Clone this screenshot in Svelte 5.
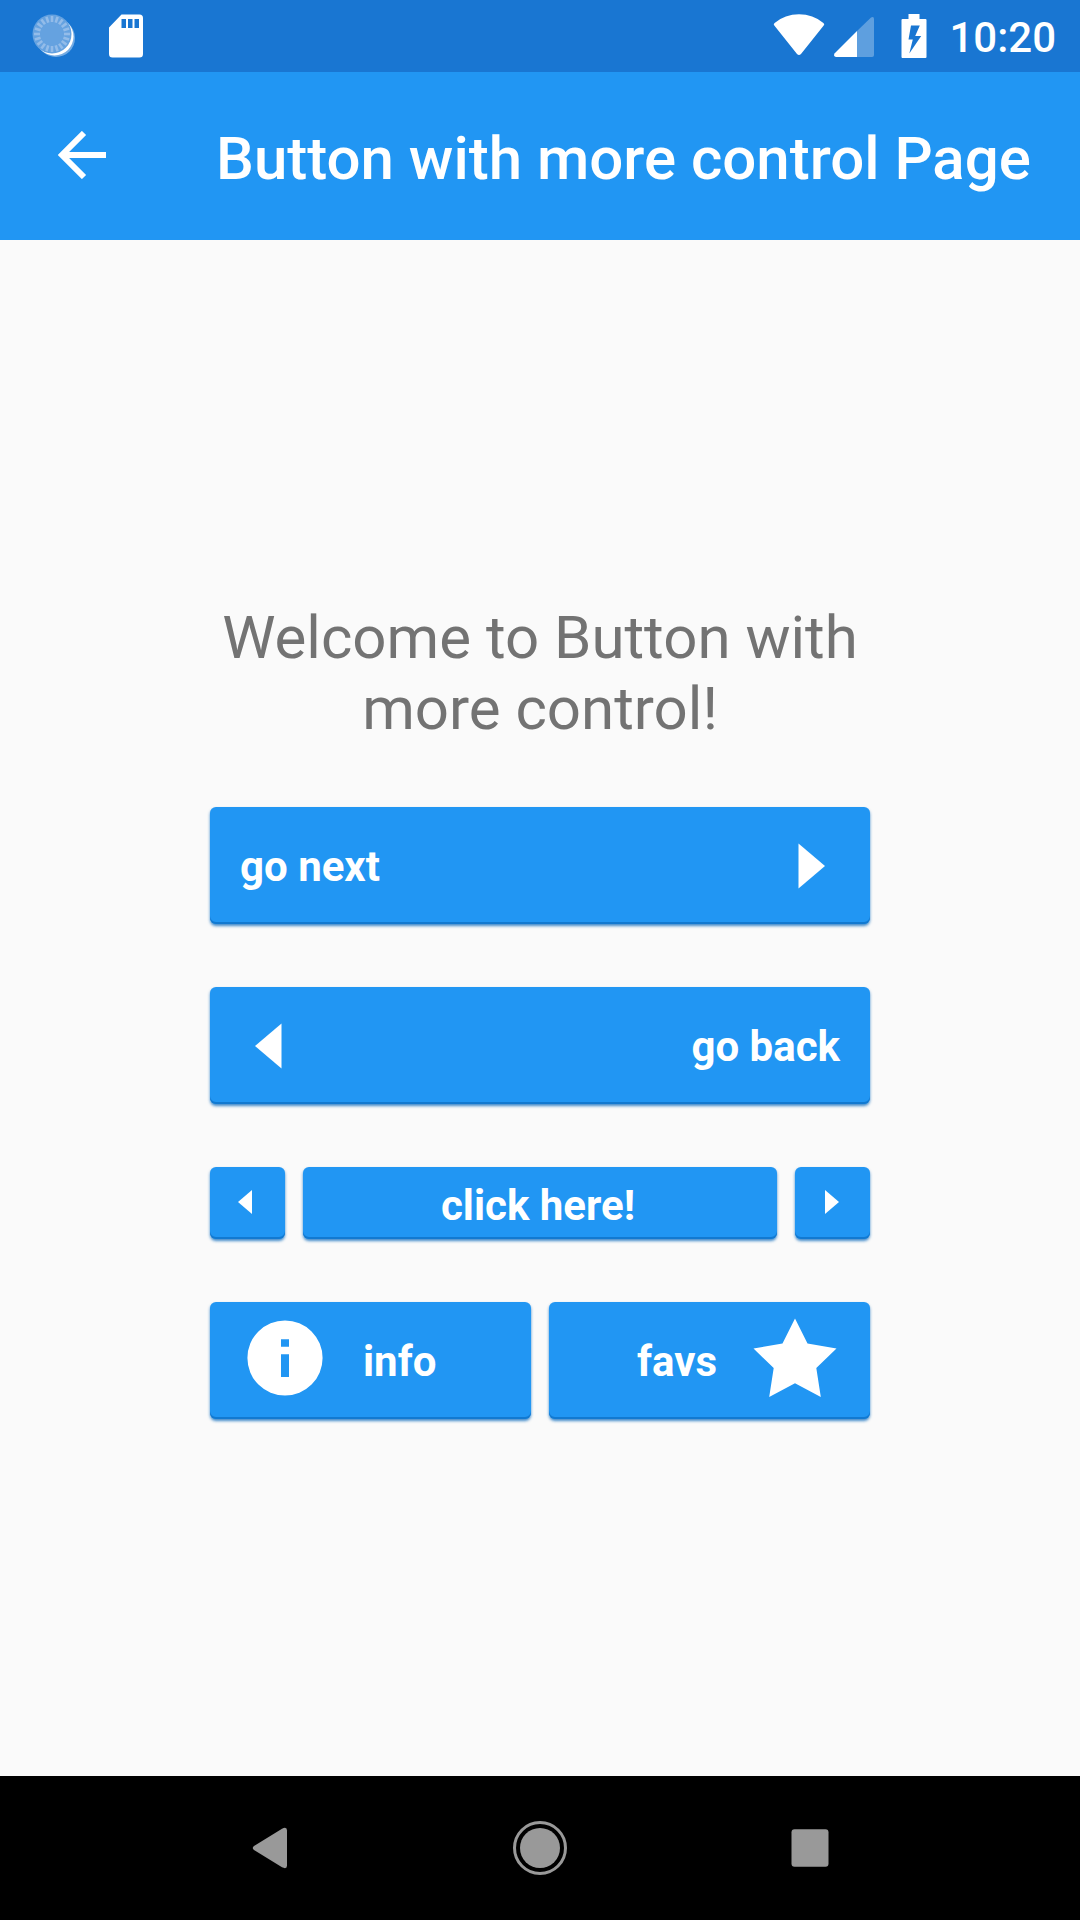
<script>
  const ticks = Array.from({ length: 20 }, (_, i) => i * 18);
</script>

<div class="screen">
  <header class="status">
    <div class="group notices">
      <svg width="44" height="44" viewBox="0 0 44 44" aria-hidden="true">
        <circle cx="24" cy="24" r="19" fill="#fff" opacity=".4" />
        <circle cx="22.500" cy="22.500" r="19" fill="#fff" />
        <circle cx="20" cy="20" r="19.500" fill="#65a2e0" />
        <g stroke="#93bce9" stroke-width="2.600">
          {#each ticks as angle}
            <path d="M20 2v6" transform="rotate({angle} 20 20)" />
          {/each}
        </g>
      </svg>
      <svg width="36" height="44" viewBox="0 0 36 44" aria-hidden="true">
        <path fill="#fff" fill-rule="evenodd" d="M13.500 0.500H31.500Q35 .5 35 4V40Q35 43.500 31.500 43.500H4.500Q1 43.500 1 40V13.500ZM13.500 5v9h4.500V5ZM20 5v9h4.500V5ZM26.500 5v9H31V5Z" />
      </svg>
    </div>
    <div class="group system">
      <svg width="52" height="44" viewBox="0 0 52 44" aria-hidden="true">
        <path fill="#fff" d="M1.300 11.500Q0 10.300 1.600 9Q12 .3 26 .3T50.400 9Q52 10.300 50.700 11.500L28 40Q26 42 24 40Z" />
      </svg>
      <svg width="42" height="44" viewBox="0 0 42 44" aria-hidden="true">
        <path fill="#fff" opacity=".3" d="M24 17L38 3.500Q41 2 41 5V41Q41 43 39 43H24Z" />
        <path fill="#fff" d="M24 17V43H3Q0 42 1.500 39.500Z" />
      </svg>
      <svg class="battery" width="26" height="44" viewBox="0 0 26 44" aria-hidden="true">
        <path fill="#fff" d="M7.500 0h11v5H24.500Q25.500 5 25.500 6V43Q25.500 44 24.500 44H1.500Q.5 44 .5 43V6Q.5 5 1.500 5H7.500Z" />
        <path fill="#1976d2" d="M10 11.500h8.800l-4.600 10.500h6L8.300 39.500l3.500-14H7.500z" />
      </svg>
      <time>10:20</time>
    </div>
  </header>

  <div class="appbar">
    <button class="back" aria-label="Navigate up">
      <svg width="48" height="48" viewBox="0 0 48 48" aria-hidden="true">
        <path fill="none" stroke="#fff" stroke-width="6" d="M26 2L4 24l22 22M4 24h44" />
      </svg>
    </button>
    <h1>Button with more control Page</h1>
  </div>

  <main>
    <div class="stack">
      <p>Welcome to Button with more control!</p>
      <button class="btn tall spread">
        <span>go next</span>
        <svg class="arrow" width="28" height="46" viewBox="0 0 28 46" aria-hidden="true"><path fill="#fff" d="M.5 .5L27 23L.5 45.500Z" /></svg>
      </button>
      <button class="btn tall spread">
        <svg class="arrow" width="28" height="46" viewBox="0 0 28 46" aria-hidden="true"><path fill="#fff" d="M27.500 .5L1 23L27.500 45.500Z" /></svg>
        <span>go back</span>
      </button>
      <div class="row small">
        <button class="btn" aria-label="Previous">
          <svg width="20" height="26" viewBox="0 0 20 26" aria-hidden="true"><path fill="#fff" d="M14 0L0 12L14 24Z" /></svg>
        </button>
        <button class="btn"><span>click here!</span></button>
        <button class="btn" aria-label="Next">
          <svg width="16" height="26" viewBox="0 0 16 26" aria-hidden="true"><path fill="#fff" d="M0 0L14 12L0 24Z" /></svg>
        </button>
      </div>
      <div class="row pair">
        <button class="btn tall info">
          <svg width="76" height="76" viewBox="0 0 76 76" aria-hidden="true">
            <path fill="#fff" fill-rule="evenodd" d="M38 .4A37.600 37.600 0 0 1 38 75.600A37.600 37.600 0 0 1 38 .4ZM34 19.200V26.800H42V19.200ZM34 34.200V57H42V34.200Z" />
          </svg>
          <span>info</span>
        </button>
        <button class="btn tall favs">
          <span>favs</span>
          <svg width="84" height="80" viewBox="0 0 84 80" aria-hidden="true">
            <path fill="#fff" d="M42 .5L54.500 25.500L83.500 30.500L63.300 50L67.800 79L42 65.200L16.200 79L20.700 50L.5 30.500L29.500 25.500Z" />
          </svg>
        </button>
      </div>
    </div>
  </main>

  <nav aria-label="System">
    <button aria-label="Back">
      <svg width="56" height="56" viewBox="0 0 56 56" aria-hidden="true"><path fill="#999" d="M12 25.500L40 3.800Q45 1 45 6V50Q45 55 40 52.200L12 30.500Q9.500 28 12 25.500Z" transform="translate(0 5.600) scale(1 .8)" /></svg>
    </button>
    <button aria-label="Home">
      <svg width="56" height="56" viewBox="0 0 56 56" aria-hidden="true"><circle cx="28" cy="28" r="20" fill="#999" /><circle cx="28" cy="28" r="25.500" fill="none" stroke="#999" stroke-width="3" /></svg>
    </button>
    <button aria-label="Recent apps">
      <svg width="56" height="56" viewBox="0 0 56 56" aria-hidden="true"><rect x="9.500" y="9.300" width="37" height="37.400" rx="3" fill="#999" /></svg>
    </button>
  </nav>
</div>

<style>
  :global(body) {
    margin: 0;
  }

  .screen {
    min-height: 100vh;
    display: flex;
    flex-direction: column;
    background: #fafafa;
    font-family: Roboto, sans-serif;
  }

  svg {
    display: block;
    flex: none;
  }

  button {
    border: 0;
    padding: 0;
    background: none;
    font: inherit;
    color: inherit;
    cursor: pointer;
  }

  .status {
    height: 72px;
    box-sizing: border-box;
    padding: 0 24px 0 32px;
    display: flex;
    align-items: center;
    justify-content: space-between;
    background: #1976d2;
    color: #fff;
  }

  .group {
    display: flex;
    align-items: center;
  }

  .notices {
    gap: 32px;
  }

  .system {
    gap: 8px;
  }

  .battery {
    margin: 0 14px 0 18px;
  }

  time {
    font-size: 42px;
    line-height: 48px;
    font-weight: 500;
    padding-top: 4px;
  }

  .appbar {
    height: 168px;
    box-sizing: border-box;
    padding: 0 32px 2px 58px;
    display: flex;
    align-items: center;
    gap: 110px;
    background: #2196f3;
    color: #fff;
  }

  h1 {
    margin: 0;
    padding-top: 8px;
    font-size: 60px;
    line-height: 72px;
    font-weight: 500;
    white-space: nowrap;
  }

  main {
    flex: 1;
    display: flex;
    justify-content: center;
    align-items: center;
  }

  .stack {
    width: 660px;
    max-width: 100%;
    padding-bottom: 4px;
    display: flex;
    flex-direction: column;
    gap: 63px;
  }

  p {
    margin: 0;
    padding-top: 8px;
    font-size: 60px;
    line-height: 71px;
    text-align: center;
    color: #737373;
  }

  .btn {
    box-sizing: border-box;
    min-height: 72px;
    display: flex;
    align-items: center;
    justify-content: center;
    border-radius: 6px;
    background: #2196f3;
    box-shadow: inset 0 -2px 0 #1279d0, 0 2px 3px rgba(18, 110, 190, 0.8);
    color: #fff;
    font-size: 42px;
    line-height: 48px;
    font-weight: 700;
  }

  .btn span {
    padding-top: 2px;
  }

  .tall {
    min-height: 117px;
  }

  .spread {
    justify-content: space-between;
    padding: 2px 30px 0;
  }

  .arrow {
    margin: 0 14px;
  }

  .row {
    display: grid;
    gap: 18px;
  }

  .small {
    grid-template-columns: 75px 1fr 75px;
  }

  .small span {
    padding: 6px 4px 0 0;
  }

  .pair {
    grid-template-columns: 1fr 1fr;
  }

  .pair span {
    padding-top: 8px;
  }

  .info {
    justify-content: flex-start;
    padding: 0 37px 4px;
    gap: 40px;
  }

  .favs {
    justify-content: flex-end;
    padding: 0 33px 4px;
    gap: 36px;
  }

  nav {
    height: 144px;
    padding: 0 135px;
    display: grid;
    grid-template-columns: repeat(3, 1fr);
    background: #000;
  }

  nav button {
    display: flex;
    align-items: center;
    justify-content: center;
  }
</style>
